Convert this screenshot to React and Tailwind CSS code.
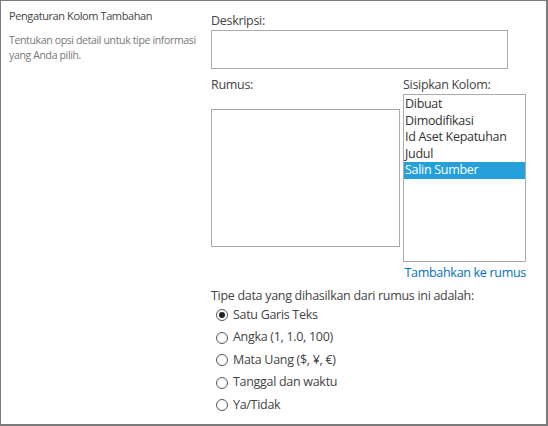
import React, { useState } from "react";

const columns = ["Dibuat", "Dimodifikasi", "Id Aset Kepatuhan", "Judul", "Salin Sumber"];
const types = ["Satu Garis Teks", "Angka (1, 1.0, 100)", "Mata Uang ($, ¥, €)", "Tanggal dan waktu", "Ya/Tidak"];

function Radio({ checked }) {
  return (
    <span className="w-[12px] h-[12px] rounded-full border border-[#555] bg-white flex items-center justify-center shrink-0">
      {checked && <span className="w-[6px] h-[6px] rounded-full bg-[#222]" />}
    </span>
  );
}

export default function App() {
  const [selected, setSelected] = useState(4);
  const [type, setType] = useState(0);

  return (
    <div
      className="w-[548px] h-[426px] bg-white border-l border-t border-r-2 border-b-2 border-[#7b7b7b] flex text-[#444]"
      style={{ fontFamily: '"Open Sans", "Noto Sans", sans-serif' }}
    >
      {/* left description */}
      <div className="w-[210px] shrink-0 pl-[8px] pt-[7px]">
        <div className="text-[11px] leading-[16px] tracking-[-0.4px] text-[#444]">Pengaturan Kolom Tambahan</div>
        <div className="mt-[9px] text-[10.5px] leading-[15px] tracking-[-0.35px] text-[#777] whitespace-nowrap">
          Tentukan opsi detail untuk tipe informasi
          <br />
          yang Anda pilih.
        </div>
      </div>

      {/* form */}
      <div className="flex-1 pt-[10px] text-[12.5px] tracking-[-0.3px]">
        <div className="leading-[19px]">Deskripsi:</div>
        <div className="w-[297px] h-[39px] border border-[#ababab] bg-white" />

        <div className="flex mt-[6px]">
          <div className="w-[192px]">
            <div className="leading-[19px]">Rumus:</div>
            <div className="mt-[15px] w-[189px] h-[138px] border border-[#ababab] bg-white" />
          </div>
          <div className="w-[123px]">
            <div className="leading-[19px]">Sisipkan Kolom:</div>
            <div className="h-[168px] border border-[#ababab] bg-white pt-[1px]">
              {columns.map((c, i) => (
                <div
                  key={c}
                  onClick={() => setSelected(i)}
                  className={`h-[16.5px] leading-[16.5px] px-[1px] whitespace-nowrap cursor-default ${
                    selected === i ? "bg-[#26a0da] text-white" : "text-[#333]"
                  }`}
                >
                  {c}
                </div>
              ))}
            </div>
            <div className="mt-[2px] text-right leading-[17px] text-[#0072c6] whitespace-nowrap">Tambahkan ke rumus</div>
          </div>
        </div>

        <div className="mt-[7px] leading-[16px]">Tipe data yang dihasilkan dari rumus ini adalah:</div>
        <div>
          {types.map((t, i) => (
            <div
              key={t}
              onClick={() => setType(i)}
              className="h-[22.5px] flex items-center gap-[5px] pl-[5px]"
            >
              <Radio checked={type === i} />
              <span className="text-[#444]">{t}</span>
            </div>
          ))}
        </div>
      </div>
    </div>
  );
}
